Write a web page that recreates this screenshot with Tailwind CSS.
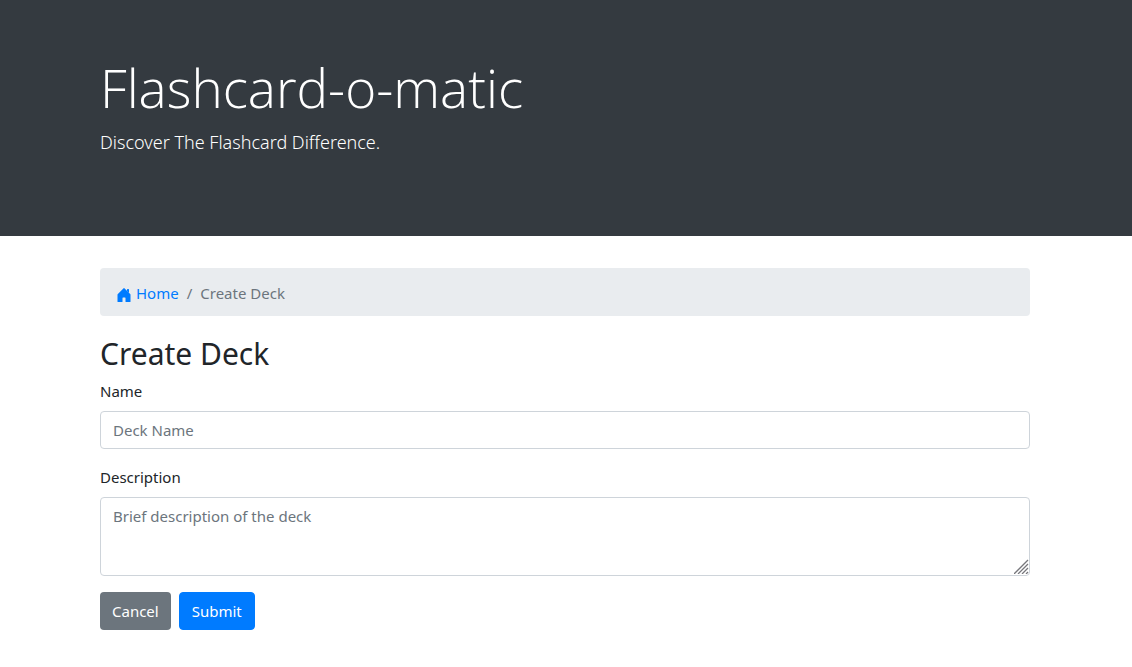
<!DOCTYPE html>
<html lang="en">
<head>
<meta charset="utf-8">
<meta name="viewport" content="width=device-width, initial-scale=1">
<title>Flashcard-o-matic</title>
<script src="https://cdn.jsdelivr.net/npm/@tailwindcss/browser@4"></script>
</head>
<body class="bg-white font-['Noto_Sans','Open_Sans',sans-serif] text-[15px] leading-6 text-[#212529]">
<header class="bg-[#343a40] px-4 pt-16 pb-20 text-white">
  <div class="mx-auto max-w-[932px]">
    <h1 class="mb-2 font-['Open_Sans',sans-serif] text-[53px] leading-[48px] font-light">Flashcard-o-matic</h1>
    <p class="pt-2 font-['Noto_Sans',sans-serif] text-lg leading-7 font-light">Discover The Flashcard Difference.</p>
  </div>
</header>
<div class="pr-0.5">
<main class="mx-auto max-w-[962px] px-4 pt-8">
  <nav aria-label="breadcrumb" class="mb-[18px] rounded bg-[#e9ecef] px-4 pt-[13px] pb-[11px]">
    <ol class="flex items-center text-[#6c757d]">
      <li><a href="#" class="flex items-center gap-1 text-[#007bff]">
        <svg class="mt-1 size-4" viewBox="0 0 16 16" fill="currentColor" aria-hidden="true"><path d="M6.5 10.995V14.5a.5.5 0 0 1-.5.5H2a.5.5 0 0 1-.5-.5v-7a.5.5 0 0 1 .146-.354l6-6a.5.5 0 0 1 .708 0l6 6a.5.5 0 0 1 .146.354v7a.5.5 0 0 1-.5.5h-4a.5.5 0 0 1-.5-.5V11c0-.25-.25-.5-.5-.5H7c-.25 0-.5.25-.5.495z"/><path d="M13 2.500V6l-2-2V2.500a.5.5 0 0 1 .5-.5h1a.5.5 0 0 1 .5.5z"/></svg>
        Home</a></li>
      <li aria-hidden="true" class="px-2">/</li>
      <li aria-current="page">Create Deck</li>
    </ol>
  </nav>
  <form>
    <h2 class="mb-[5px] text-[30px] leading-10">Create Deck</h2>
    <label for="name" class="mb-2 block">Name</label>
    <input id="name" type="text" placeholder="Deck Name" class="mb-4 block h-[38px] w-full rounded border border-[#ced4da] px-3 placeholder:text-[#6c757d]">
    <label for="description" class="mb-2 block">Description</label>
    <div class="relative mb-4">
      <textarea id="description" rows="3" placeholder="Brief description of the deck" class="block h-[79px] w-full resize-none rounded border border-[#ced4da] px-3 py-1.5 placeholder:text-[#6c757d]"></textarea>
      <svg class="pointer-events-none absolute right-px bottom-0.5 size-[15px]" viewBox="0 0 15 15" fill="none" stroke="#77777c" stroke-width="1.3" aria-hidden="true"><path d="M0 15L14 1M4 15L14 5M8 15L14 9M12 15L14 13"/></svg>
    </div>
    <div class="flex gap-2">
      <button type="button" class="h-[38px] rounded bg-[#6c757d] px-3 text-white">Cancel</button>
      <button type="submit" class="h-[38px] rounded border border-[#007bff] bg-[#007bff] px-3 text-white">Submit</button>
    </div>
  </form>
</main>
</div>
</body>
</html>
